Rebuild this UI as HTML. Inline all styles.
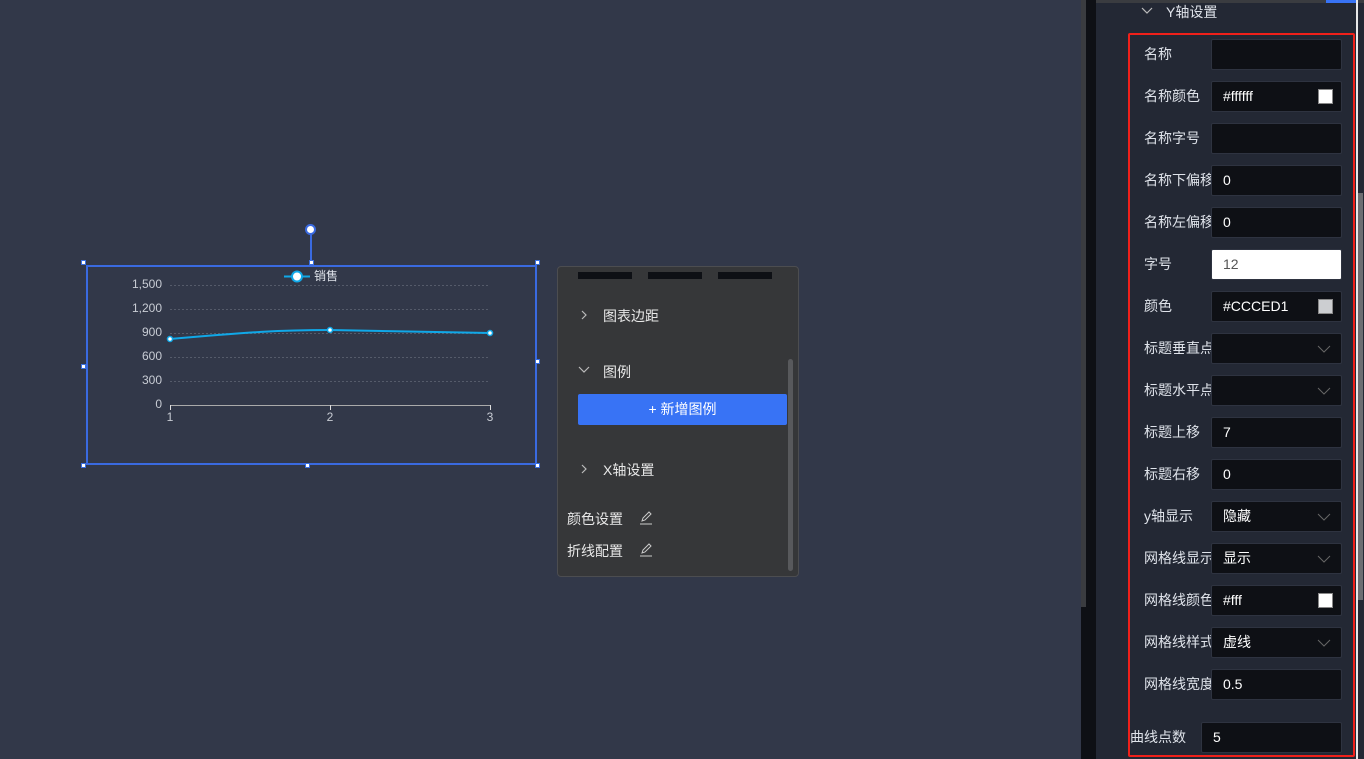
<!DOCTYPE html>
<html><head><meta charset="utf-8"><style>
*{margin:0;padding:0;box-sizing:border-box}
body{width:1364px;height:759px;overflow:hidden;background:#323849;font-family:"Liberation Sans","Noto Sans CJK SC",sans-serif;position:relative;color:#fff}
.abs{position:absolute}
.lab{position:absolute;left:1144px;width:67px;overflow:hidden;white-space:nowrap;font-size:14px;color:#dfe3ea;line-height:31px}
.inp{position:absolute;left:1211px;width:131px;height:31px;background:#0e1015;border:1px solid #2e3340;border-radius:2px;font-size:14px;line-height:29px;padding-left:11px;color:#fff}
.sw{position:absolute;right:8px;top:7px;width:15px;height:15px;border:1px solid #888}
.chev{position:absolute;right:10px;top:8px;width:14px;height:14px}
.h{position:absolute;width:5px;height:5px;background:#fff;border:1px solid #3a6fe0}
</style></head><body>
<div class="abs" style="left:86px;top:265px;width:451px;height:200px;border:2px solid #3a6ae0"></div>
<div class="abs" style="left:310px;top:233px;width:2px;height:30px;background:#3a6ae0"></div>
<div class="abs" style="left:305px;top:224px;width:11px;height:11px;border-radius:50%;background:#fff;border:2px solid #3a6ae0"></div>
<div class="h" style="left:81px;top:260px"></div><div class="h" style="left:309px;top:260px"></div><div class="h" style="left:535px;top:260px"></div>
<div class="h" style="left:81px;top:364px"></div><div class="h" style="left:535px;top:359px"></div>
<div class="h" style="left:81px;top:463px"></div><div class="h" style="left:305px;top:463px"></div><div class="h" style="left:535px;top:463px"></div>
<svg class="abs" style="left:0;top:0" width="560" height="470">
<g stroke="#555b6a" stroke-dasharray="2,2" stroke-width="1">
<line x1="170" y1="285.5" x2="490" y2="285.5"/><line x1="170" y1="309.5" x2="490" y2="309.5"/><line x1="170" y1="333.5" x2="490" y2="333.5"/><line x1="170" y1="357.5" x2="490" y2="357.5"/><line x1="170" y1="381.5" x2="490" y2="381.5"/></g>
<line x1="170" y1="405.5" x2="491" y2="405.5" stroke="#aaa"/>
<g stroke="#ddd"><line x1="170.5" y1="405" x2="170.5" y2="410"/><line x1="330.5" y1="405" x2="330.5" y2="410"/><line x1="490.5" y1="405" x2="490.5" y2="410"/></g>
<g font-size="12" fill="#c8ccd4" text-anchor="end"><text x="162" y="288">1,500</text><text x="162" y="312">1,200</text><text x="162" y="336">900</text><text x="162" y="360">600</text><text x="162" y="384">300</text><text x="162" y="408">0</text></g>
<g font-size="12" fill="#c8ccd4" text-anchor="middle"><text x="170" y="421">1</text><text x="330" y="421">2</text><text x="490" y="421">3</text></g>
<path d="M170 339 C250 332 280 330 330 330 C400 331 450 332 490 333" fill="none" stroke="#10a8e8" stroke-width="2"/>
<g fill="#fff" stroke="#10a8e8" stroke-width="1.5"><circle cx="170" cy="339" r="2.5"/><circle cx="330" cy="330" r="2.5"/><circle cx="490" cy="333" r="2.5"/></g>
<line x1="284" y1="276.5" x2="310" y2="276.5" stroke="#10a8e8" stroke-width="2"/>
<circle cx="297" cy="276.5" r="5" fill="#fff" stroke="#10a8e8" stroke-width="2"/>
<text x="314" y="280" font-size="12" fill="#dfe3ea">销售</text>
</svg>
<div class="abs" style="left:557px;top:266px;width:242px;height:311px;background:#363739;border:1px solid #4c4d50;border-radius:4px;font-size:14px;color:#e8e8e8">
<div class="abs" style="left:20px;top:5px;width:54px;height:7px;background:#0e1015"></div>
<div class="abs" style="left:90px;top:5px;width:54px;height:7px;background:#0e1015"></div>
<div class="abs" style="left:160px;top:5px;width:54px;height:7px;background:#0e1015"></div>
<svg class="abs" style="left:21px;top:42px" width="10" height="12"><path d="M3 2l4 4-4 4" fill="none" stroke="#bbb" stroke-width="1.2"/></svg><div class="abs" style="left:45px;top:39px">图表边距</div>
<svg class="abs" style="left:20px;top:98px" width="12" height="10"><path d="M1 2l5 5 5-5" fill="none" stroke="#bbb" stroke-width="1.2"/></svg><div class="abs" style="left:45px;top:95px">图例</div>
<div class="abs" style="left:20px;top:127px;width:209px;height:31px;background:#3873f5;border-radius:2px;text-align:center;line-height:31px;color:#fff">+ 新增图例</div>
<svg class="abs" style="left:21px;top:196px" width="10" height="12"><path d="M3 2l4 4-4 4" fill="none" stroke="#bbb" stroke-width="1.2"/></svg><div class="abs" style="left:45px;top:193px">X轴设置</div>
<div class="abs" style="left:9px;top:242px">颜色设置</div>
<svg class="abs" style="left:81px;top:244px" width="14" height="14"><path d="M3 10l1-3 6-6 2 2-6 6z" fill="none" stroke="#ccc"/><line x1="1" y1="13" x2="13" y2="13" stroke="#ccc"/></svg>
<div class="abs" style="left:9px;top:274px">折线配置</div>
<svg class="abs" style="left:81px;top:276px" width="14" height="14"><path d="M3 10l1-3 6-6 2 2-6 6z" fill="none" stroke="#ccc"/><line x1="1" y1="13" x2="13" y2="13" stroke="#ccc"/></svg>
<div class="abs" style="left:230px;top:92px;width:5px;height:212px;background:#58595c;border-radius:3px"></div>
</div>
<div class="abs" style="left:1081px;top:0;width:15px;height:759px;background:#0e1015"></div>
<div class="abs" style="left:1081px;top:0;width:5px;height:607px;background:#3a3c40"></div>
<div class="abs" style="left:1096px;top:0;width:268px;height:759px;background:#232834"></div>
<div class="abs" style="left:1096px;top:0;width:268px;height:3px;background:#3a3c40"></div>
<div class="abs" style="left:1326px;top:0;width:30px;height:3px;background:#3873f5"></div>
<div class="abs" style="left:1356px;top:0;width:2px;height:759px;background:#e8e8e8"></div>
<div class="abs" style="left:1358px;top:193px;width:5px;height:407px;background:#6c6e72"></div>
<svg class="abs" style="left:1141px;top:6px" width="12" height="10"><path d="M1 2l5 5 5-5" fill="none" stroke="#bbb" stroke-width="1.2"/></svg>
<div class="abs" style="left:1166px;top:2px;font-size:14px;color:#dfe3ea">Y轴设置</div>
<div class="abs" style="left:1128px;top:33px;width:227px;height:724px;border:2px solid #f0201a;border-radius:2px"></div>
<div class="lab" style="top:39px">名称</div><div class="inp" style="top:39px"></div>
<div class="lab" style="top:81px">名称颜色</div><div class="inp" style="top:81px">#ffffff<div class="sw" style="background:#fff"></div></div>
<div class="lab" style="top:123px">名称字号</div><div class="inp" style="top:123px"></div>
<div class="lab" style="top:165px">名称下偏移</div><div class="inp" style="top:165px">0</div>
<div class="lab" style="top:207px">名称左偏移</div><div class="inp" style="top:207px">0</div>
<div class="lab" style="top:249px">字号</div><div class="inp" style="top:249px;background:#fff;color:#555">12</div>
<div class="lab" style="top:291px">颜色</div><div class="inp" style="top:291px">#CCCED1<div class="sw" style="background:#ccced1"></div></div>
<div class="lab" style="top:333px">标题垂直点</div><div class="inp" style="top:333px"><svg class="chev" viewBox="0 0 14 14"><path d="M1 4l6 6 6-6" fill="none" stroke="#666"/></svg></div>
<div class="lab" style="top:375px">标题水平点</div><div class="inp" style="top:375px"><svg class="chev" viewBox="0 0 14 14"><path d="M1 4l6 6 6-6" fill="none" stroke="#666"/></svg></div>
<div class="lab" style="top:417px">标题上移</div><div class="inp" style="top:417px">7</div>
<div class="lab" style="top:459px">标题右移</div><div class="inp" style="top:459px">0</div>
<div class="lab" style="top:501px">y轴显示</div><div class="inp" style="top:501px">隐藏<svg class="chev" viewBox="0 0 14 14"><path d="M1 4l6 6 6-6" fill="none" stroke="#666"/></svg></div>
<div class="lab" style="top:543px">网格线显示</div><div class="inp" style="top:543px">显示<svg class="chev" viewBox="0 0 14 14"><path d="M1 4l6 6 6-6" fill="none" stroke="#666"/></svg></div>
<div class="lab" style="top:585px">网格线颜色</div><div class="inp" style="top:585px">#fff<div class="sw" style="background:#fff"></div></div>
<div class="lab" style="top:627px">网格线样式</div><div class="inp" style="top:627px">虚线<svg class="chev" viewBox="0 0 14 14"><path d="M1 4l6 6 6-6" fill="none" stroke="#666"/></svg></div>
<div class="lab" style="top:669px">网格线宽度</div><div class="inp" style="top:669px">0.5</div>
<div class="lab" style="top:722px;left:1130px">曲线点数</div><div class="inp" style="top:722px;left:1201px;width:141px">5</div>
</body></html>
